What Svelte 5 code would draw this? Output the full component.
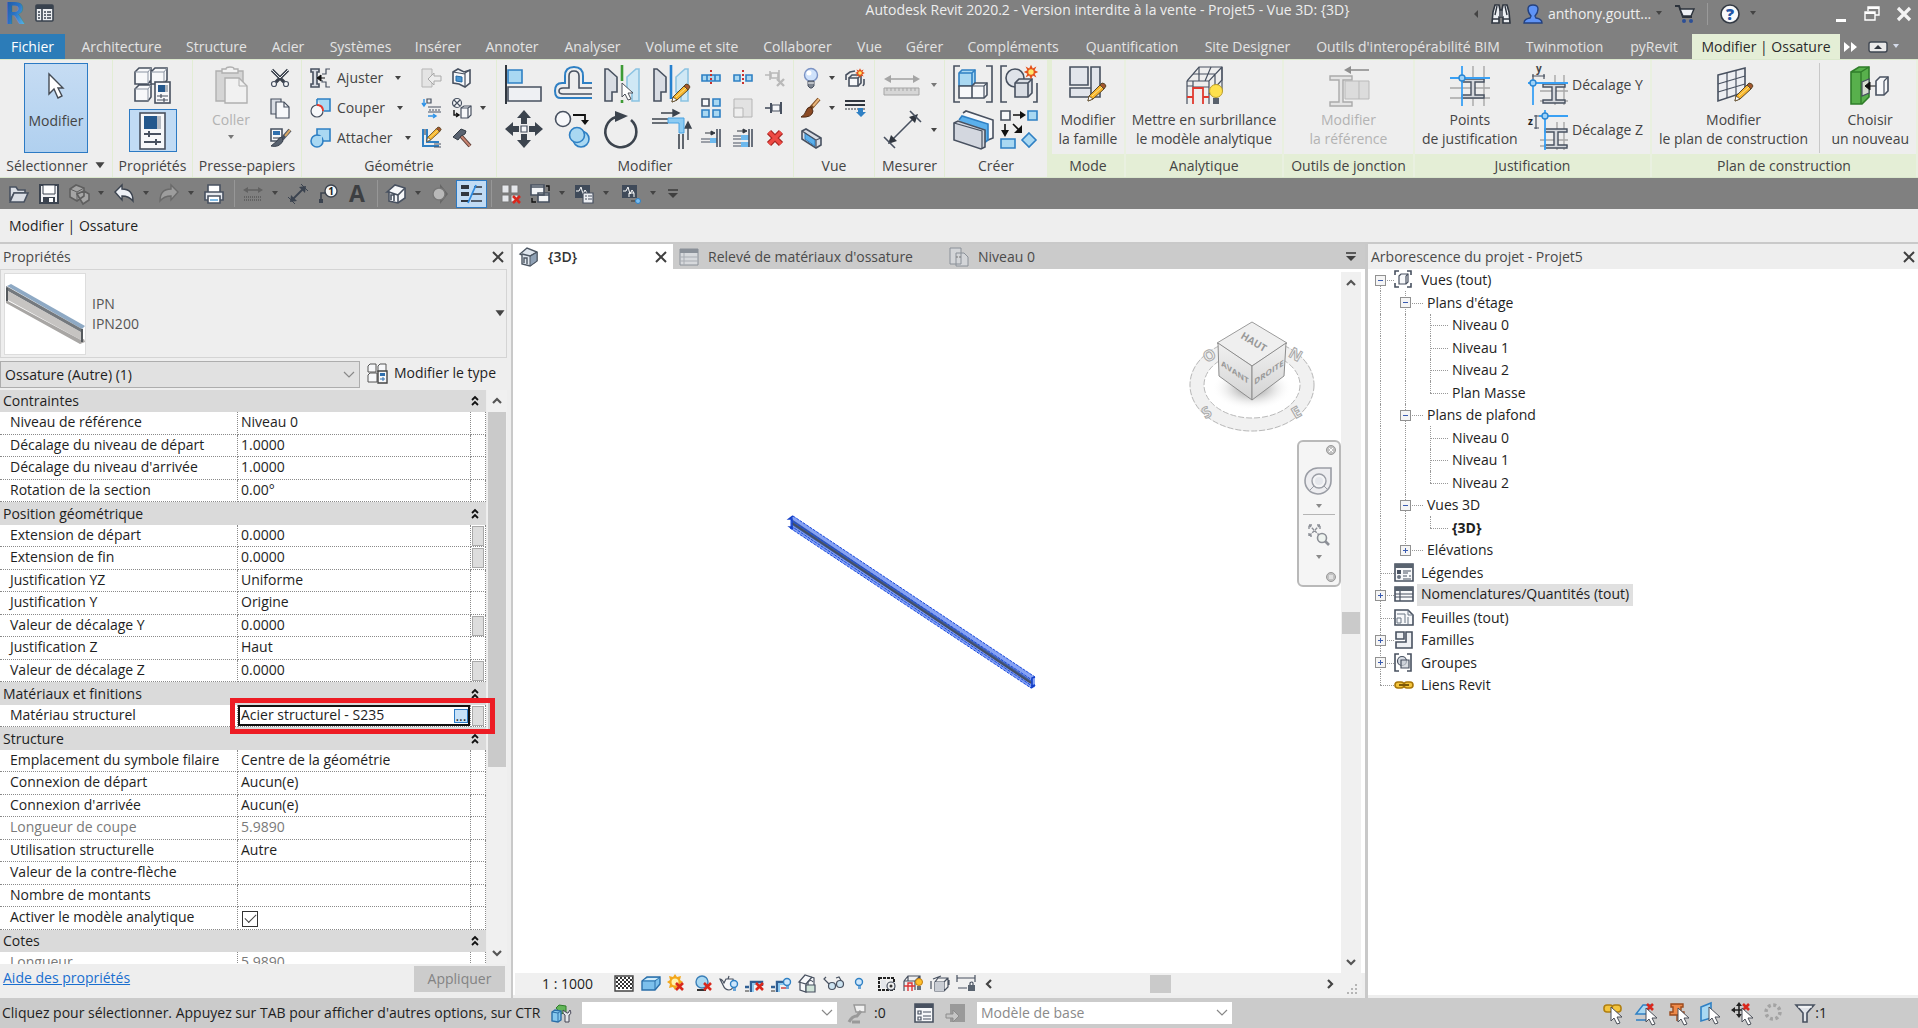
<script lang="ts">
  type Guide = 'root' | 'pipe' | 'tee' | 'end' | 'plain';

  const tabs = [
    { label: 'Architecture', width: 105 },
    { label: 'Structure', width: 85 },
    { label: 'Acier', width: 58 },
    { label: 'Systèmes', width: 87 },
    { label: 'Insérer', width: 68 },
    { label: 'Annoter', width: 80 },
    { label: 'Analyser', width: 81 },
    { label: 'Volume et site', width: 118 },
    { label: 'Collaborer', width: 93 },
    { label: 'Vue', width: 51 },
    { label: 'Gérer', width: 59 },
    { label: 'Compléments', width: 118 },
    { label: 'Quantification', width: 120 },
    { label: 'Site Designer', width: 111 },
    { label: "Outils d'interopérabilité BIM", width: 210 },
    { label: 'Twinmotion', width: 103 },
    { label: 'pyRevit', width: 76 },
  ];

  const quickAccess = [
    { icon: 'open', width: 31 },
    { icon: 'save', width: 30 },
    { icon: 'sync', width: 45, menu: true },
    { icon: 'undo', width: 45, menu: true },
    { icon: 'redo', width: 45, menu: true },
    { icon: 'print', width: 30 },
    { icon: 'sep', width: 9 },
    { icon: 'ruler', width: 45, menu: true },
    { icon: 'aligned', width: 30 },
    { icon: 'tag', width: 30 },
    { icon: 'letter', width: 29 },
    { icon: 'sep', width: 9 },
    { icon: 'house', width: 45, menu: true },
    { icon: 'section', width: 25 },
    { icon: 'thin', width: 31, active: true },
    { icon: 'sep', width: 10 },
    { icon: 'closeviews', width: 29 },
    { icon: 'switch', width: 44, menu: true },
    { icon: 'macro', width: 47, menu: true },
    { icon: 'macrolink', width: 47, menu: true },
  ];

  const smallModify = ['split', 'splitgap', 'unpin', 'array', 'scale', 'pin', 'trim1', 'trim2', 'delete'];
  const largeModify = ['align', 'offset', 'mirrorpick', 'mirrordraw', 'move', 'copy', 'rotate', 'corner'];

  const rows: { label: string; value?: string; head?: boolean; dim?: boolean; assoc?: boolean; kind?: string }[] = [
    { label: 'Contraintes', head: true },
    { label: 'Niveau de référence', value: 'Niveau 0' },
    { label: 'Décalage du niveau de départ', value: '1.0000' },
    { label: "Décalage du niveau d'arrivée", value: '1.0000' },
    { label: 'Rotation de la section', value: '0.00°' },
    { label: 'Position géométrique', head: true },
    { label: 'Extension de départ', value: '0.0000', assoc: true },
    { label: 'Extension de fin', value: '0.0000', assoc: true },
    { label: 'Justification YZ', value: 'Uniforme' },
    { label: 'Justification Y', value: 'Origine' },
    { label: 'Valeur de décalage Y', value: '0.0000', assoc: true },
    { label: 'Justification Z', value: 'Haut' },
    { label: 'Valeur de décalage Z', value: '0.0000', assoc: true },
    { label: 'Matériaux et finitions', head: true },
    { label: 'Matériau structurel', value: 'Acier structurel - S235', assoc: true, kind: 'material' },
    { label: 'Structure', head: true },
    { label: 'Emplacement du symbole filaire', value: 'Centre de la géométrie' },
    { label: 'Connexion de départ', value: 'Aucun(e)' },
    { label: "Connexion d'arrivée", value: 'Aucun(e)' },
    { label: 'Longueur de coupe', value: '5.9890', dim: true },
    { label: 'Utilisation structurelle', value: 'Autre' },
    { label: 'Valeur de la contre-flèche', value: '' },
    { label: 'Nombre de montants', value: '' },
    { label: 'Activer le modèle analytique', kind: 'check' },
    { label: 'Cotes', head: true },
    { label: 'Longueur', value: '5.9890', dim: true },
  ];

  const tree: { label: string; guides: Guide[]; box?: string; icon?: string; bold?: boolean; selected?: boolean }[] = [
    { label: 'Vues (tout)', guides: ['root'], box: '-', icon: 'tviews' },
    { label: "Plans d'étage", guides: ['pipe', 'tee'], box: '-' },
    { label: 'Niveau 0', guides: ['pipe', 'pipe', 'tee'] },
    { label: 'Niveau 1', guides: ['pipe', 'pipe', 'tee'] },
    { label: 'Niveau 2', guides: ['pipe', 'pipe', 'tee'] },
    { label: 'Plan Masse', guides: ['pipe', 'pipe', 'end'] },
    { label: 'Plans de plafond', guides: ['pipe', 'tee'], box: '-' },
    { label: 'Niveau 0', guides: ['pipe', 'pipe', 'tee'] },
    { label: 'Niveau 1', guides: ['pipe', 'pipe', 'tee'] },
    { label: 'Niveau 2', guides: ['pipe', 'pipe', 'end'] },
    { label: 'Vues 3D', guides: ['pipe', 'tee'], box: '-' },
    { label: '{3D}', guides: ['pipe', 'pipe', 'end'], bold: true },
    { label: 'Elévations', guides: ['pipe', 'end'], box: '+' },
    { label: 'Légendes', guides: ['tee'], icon: 'tlegend' },
    { label: 'Nomenclatures/Quantités (tout)', guides: ['tee'], box: '+', icon: 'tschedule', selected: true },
    { label: 'Feuilles (tout)', guides: ['tee'], icon: 'tsheet' },
    { label: 'Familles', guides: ['tee'], box: '+', icon: 'tfamily' },
    { label: 'Groupes', guides: ['tee'], box: '+', icon: 'tgroup' },
    { label: 'Liens Revit', guides: ['end'], icon: 'tlink' },
  ];

  const viewControls = [
    { icon: 'vdetail', width: 27 },
    { icon: 'vcube', width: 25 },
    { icon: 'vsun', width: 28 },
    { icon: 'vshadow', width: 25 },
    { icon: 'vrender', width: 26 },
    { icon: 'vcrop', width: 26 },
    { icon: 'vcropshow', width: 26 },
    { icon: 'vlock', width: 27 },
    { icon: 'vglasses', width: 26 },
    { icon: 'vbulb', width: 27 },
    { icon: 'vtemp', width: 26 },
    { icon: 'vanalytic', width: 27 },
    { icon: 'vdisplace', width: 26 },
    { icon: 'vconstraint', width: 29 },
  ];

  const selectionTools = ['slinks', 'sunderlay', 'spinned', 'sface', 'sdrag', 'sbusy'];

  const D = 'stroke="#485160" stroke-width="1.6"';
  const d = 'stroke="#485160" stroke-width="1.2"';
  const B = 'stroke="#2f80c4" stroke-width="1.6"';
  const W = 'fill="#f7f8fa"';
  const G = 'fill="#d9dde4"';
  const L = 'fill="#a9d8f2"';
  const cursor = (x: number, y: number) =>
    `<path transform="translate(${x} ${y})" d="M0 0v14l3-3 3 6 3-1-3-6h5z" fill="#fff" stroke="#4a4f58"/>`;
  const pencil = (x: number, y: number) =>
    `<g transform="translate(${x} ${y})"><path d="M2 13 13 2l4 4L6 16l-5 2z" fill="#f6b42c" stroke="#5a4626"/><path d="m13 2 2-2q3 0 4 3l-2 3z" fill="#a2562e" stroke="#5a4626"/><path d="m2 13 4 3-5 2z" fill="#fff" stroke="#5a4626" stroke-width=".8"/><path d="M5 13 15 4" stroke="#fde58a"/></g>`;
  const redX = (x: number, y: number, s: number) =>
    `<path d="M${x} ${y}l${s} ${s}M${x + s} ${y}l${-s} ${s}" stroke="#d9281d" stroke-width="2.6"/>`;
  const beamSection = (x: number, y: number) =>
    `<path transform="translate(${x} ${y})" d="M0 0h22v3h-9v13h9v3H0v-3h9V3H0z" fill="#d5d8dd" stroke="#485160" stroke-width="1.4"/>`;
  const star = (x: number, y: number, k: number) =>
    `<g transform="translate(${x} ${y}) scale(${k})"><path d="m0-8 2 4 4-2-2 4 4 2-4 2 2 4-4-2-2 4-2-4-4 2 2-4-4-2 4-2-2-4 4 2z" fill="#e5501a"/><circle r="3" fill="#ffe66b"/></g>`;
  const bulb = (x: number, y: number) =>
    `<g transform="translate(${x} ${y})"><circle cx="4" cy="4" r="3.5" fill="#cfe7fb" stroke="#2f80c4" stroke-width="1.4"/><path d="M3 8h3v3H3z" fill="#6aa5d8"/></g>`;

  const icons: Record<string, string> = {
    logo: `<defs><linearGradient id="rv" x1="0" y1="0" x2="1" y2="1"><stop offset="0" stop-color="#1d4f9b"/><stop offset=".5" stop-color="#2a73c4"/><stop offset="1" stop-color="#5fc0ee"/></linearGradient></defs><text x="0" y="21" font-family="Lato, sans-serif" font-weight="900" font-size="30" fill="url(#rv)">R</text>`,
    home: `<rect x="1" y="2" width="17" height="16" rx="1" fill="#eceef1" stroke="#39424e" stroke-width="1.6"/><path d="M1 2h17v4H1z" fill="#39424e"/><path d="M7 6v12" stroke="#39424e" stroke-width="1.6"/><path d="M3 9h2M3 12h2M3 15h2M9 9h2M9 12h2M9 15h2M12 9h4M12 12h4M12 15h4" stroke="#39424e" stroke-width="1.4"/>`,
    binoculars: `<path d="M2 8 4 1h4l1 5h2l1-5h4l2 7 1 11h-7v-6H8v6H1z" fill="#eceff3" stroke="#2f3640" stroke-width="1.6"/><path d="M1 15h7M12 15h7M9 6v6M11 6v6M6 2 4 11M14 2l2 9" stroke="#2f3640" stroke-width="1.4"/>`,
    user: `<path d="M1 19q0-4 6-5l1-2Q5 9 5 5q0-4 5-4t5 4q0 4-3 7l1 2q6 1 6 5z" fill="#5f93f5" stroke="#24417e" stroke-width="1.4"/>`,
    cart: `<path d="M0 2h4l4 11h9" stroke="#2b323b" stroke-width="2"/><path d="M5 5h14l-3 7H8z" fill="#eef0f4" stroke="#2b323b" stroke-width="1.4"/><circle cx="9" cy="17" r="2" fill="#2c4f96"/><circle cx="16" cy="17" r="2" fill="#2c4f96"/>`,
    help: `<circle cx="10" cy="10" r="9" fill="#f8f9fb" stroke="#333a44" stroke-width="1.6"/><text x="10" y="16" text-anchor="middle" font-family="Open Sans, sans-serif" font-weight="800" font-size="16" fill="#2454a5">?</text>`,
    restore: `<path d="M4 5V1h11v8h-4M1 6h10v8H1z" stroke="#fff" stroke-width="1.4"/><path d="M4 2h11M1 7h10" stroke="#fff" stroke-width="2"/>`,
    close: `<path d="m2 2 12 12M14 2 2 14" stroke="#f4f4f4" stroke-width="3.2"/>`,
    x: `<path d="m1 1 10 10M11 1 1 11" stroke="#3f3f3f" stroke-width="2"/>`,
    arrow: `<path d="M2 1v20l5-5 4 9 4-2-4-8h5z" fill="#fff" stroke="#454b54" stroke-width="1.4"/>`,
    typeprops: `<g ${D} ${W}><path d="m1 5 4-4h12v12l-3 4H1zM17 5l4-4h12v12l-3 4H17zM1 22l4-4h12v12l-3 4H1z"/></g><path d="M1 5h13v12M14 5l3-4M17 5h13v12M30 5l3-4M1 22h13v12M14 22l3-4" stroke="#8c95a3"/><rect x="21" y="15" width="15" height="21" ${W} ${D}/><path d="M24 18h7v7h-7z" fill="#24588d"/><path d="M31 18h3v7h-3z" fill="#aeb4bc"/><path d="M23 29h11M23 33h11M27 27v4M30 31v4" ${d}/>`,
    props: `<rect x="1" y="1" width="25" height="36" ${W} ${D}/><path d="M5 4h13v13H5z" fill="#24588d"/><path d="M18 4h4v13h-4z" fill="#b6bbc3"/><path d="M5 22h17M5 30h17M10 19v6M17 27v6" stroke="#485160" stroke-width="2"/>`,
    paste: `<path d="M2 5h27v30H2z" fill="#d5d5d5" stroke="#b0b0b0" stroke-width="1.4"/><path d="M8 7V3h4q0-2 4-2t4 2h4v4z" fill="#f2f2f2" stroke="#b0b0b0" stroke-width="1.4"/><path d="M11 12h14l8 8v17H11z" fill="#f1f1f1" stroke="#b0b0b0" stroke-width="1.4"/><path d="M25 12v8h8" stroke="#b0b0b0"/>`,
    cut: `<path d="M2 2 15 15M18 2 5 15" stroke="#3a414c" stroke-width="3.2"/><path d="M2 2l8 8M18 2l-8 8" stroke="#e9ebee"/><circle cx="4" cy="16" r="2.5" ${d} ${W}/><circle cx="16" cy="16" r="2.5" ${d} ${W}/>`,
    copyclip: `<path d="M1 1h10v15H1z" ${G} ${d}/><path d="M6 4h8l5 5v11H6z" ${W} ${d}/><path d="M14 4v5h5" ${d}/>`,
    matchprops: `<path d="M1 1h11v12H1z" ${W} ${D}/><path d="M3 3h7v4H3z" fill="#2f6fae"/><path d="M3 10h7" ${d}/><path d="m20 2-8 9" stroke="#485160" stroke-width="4"/><path d="m20 2-5 6" stroke="#d8a765" stroke-width="2"/><path d="M12 9q-3 0-5 4l-6 5q8 2 12-5z" fill="#59626f" stroke="#3b434f"/>`,
    cope: `<path d="M1 1h8v3H7v12h2v3H1v-3h2V4H1z" ${G} ${D}/><path d="M20 1h-4v5h-4M20 19h-4v-5h-4v-2" ${d}/><path d="M8 10h7M11 7l-4 3 4 3z" stroke="#111" fill="#111"/>`,
    cutgeo: `<path d="M7 1h13v12h-6" ${L} ${B}/><path d="M7 1v6" ${B}/><circle cx="7" cy="13" r="6" ${W} ${d}/><path d="M7 7q6 0 6 6" stroke="#e8372c" stroke-width="1.8"/>`,
    join: `<path d="M7 1h13v12H7z" ${L} ${B}/><circle cx="7" cy="13" r="6" ${L} ${B}/><path d="M8 8h4v5H8z" fill="#a9d8f2"/>`,
    joinroof: `<path d="M1 1h10v18H1z" fill="#e4e4e4" stroke="#b5b5b5"/><path d="M20 8h-7V5l-6 6 6 6v-4h7z" fill="#ededed" stroke="#a9a9a9"/>`,
    beamjoin: `<path d="M3 1v7M1 5l2 3 2-3M7 18h7M12 16l3 2-3 2" stroke="#2e93e8" stroke-width="1.4"/><path d="M7 9h13M7 14h13" ${d}/><path d="M8 12h12" stroke="#485160" stroke-dasharray="2 1"/><path d="M6 1v4h4V1z" ${d}/>`,
    walljoin: `<path d="M2 1v17h16M6 1v13h12" stroke="#2f80c4" stroke-width="2"/><path d="M4 1v6M13 16h7M13 19h7" ${d}/><g transform="translate(5 -1) scale(.8)">${pencil(0, 0)}</g>`,
    paint: `<path d="m1 4 5-3 6 3 6-2v13l-5 4-6-3-6-1z" ${W} ${D}/><path d="M13 5v14M13 5l5-3M1 4l12 2" ${d}/><path d="m4 8 6 1v5l-6-1z" fill="#4a96d2" stroke="#2368a4"/>`,
    wallopening: `<circle cx="5" cy="5" r="4.5" ${W} ${d}/><path d="m2 2 6 6M8 2 2 8" ${d}/><path d="M2 12v5h4M4 15l3 2-3 2" stroke="#111" stroke-width="1.4"/><path d="m9 10 3-2h7v9l-3 3H9z" ${W} ${d}/><path d="M9 10h7v10M16 10l3-2" ${d}/>`,
    demolish: `<path d="m9 8 9 10" stroke="#5a3a34" stroke-width="4"/><path d="m9 8 9 10" stroke="#c78370" stroke-width="2"/><path d="M1 9 9 1l5 2-1 3-4 2-3 4z" fill="#596270" stroke="#333a44"/>`,
    align: `<path d="M1 0v39" stroke="#30363f" stroke-width="2"/><path d="M3 5h14v13H3z" ${L} ${B}/><path d="M3 22h33v14H3z" fill="#eef0f3" ${D}/>`,
    offset: `<path d="M38 18h-9V11q0-9-9-9t-9 9v7H8q-7 0-7 8t7 7h30" stroke="#2f80c4" stroke-width="2"/><path d="M38 23H25V11q0-5-5-5t-5 5v12H9q-4 0-4 3t4 3h29" ${D}/>`,
    mirrorpick: `<path d="M2 4h3l9 8v15H9v9H2z" ${G} ${D}/><path d="M36 4h-3l-9 8v15h5v9h7z" fill="#cfe8f5" stroke="#8cc3e2" stroke-width="1.6"/><path d="M19 0v16M19 35v3" stroke="#3d9b35" stroke-width="2.6"/>${cursor(19, 18)}`,
    mirrordraw: `<path d="M2 4h3l9 8v15H9v9H2z" ${G} ${D}/><path d="M36 4h-3l-9 8v15h5v9h7z" fill="#cfe8f5" stroke="#8cc3e2" stroke-width="1.6"/><path d="M19 0v34" stroke="#2580cf" stroke-width="2.6"/>${pencil(19, 19)}`,
    move: `<path d="m19 0 7 8h-4v6h-6V8h-4zM19 38l7-8h-4v-6h-6v6h-4zM0 19l8-7v4h6v6H8v4zM38 19l-8-7v4h-6v6h6v4z" fill="#3c444e"/><path d="M16 16h6v6h-6z" ${W} ${d}/>`,
    copy: `<circle cx="9" cy="9" r="7.5" ${W} ${D}/><path d="M19 5h12v6" stroke="#111" stroke-width="1.8"/><path d="m27 10 4 5 4-5z" fill="#111"/><circle cx="27" cy="29" r="8" ${L} ${B}/><circle cx="23" cy="25" r="7.5" ${L} ${B}/>`,
    rotate: `<path d="M28 10A15.500 15.500 0 1 1 13 7" stroke="#3c444e" stroke-width="2.6"/><path d="m12 1 13 5-13 6z" fill="#3c444e"/>`,
    corner: `<path d="M9 3h16M21 0l6 3-6 3zM36 30V14M33 18l3-6 3 6z" stroke="#3c444e" fill="#3c444e" stroke-width="1.4"/><path d="M0 9h16M0 13h16M27 24v15M31 24v15" stroke="#3c444e" stroke-width="1.6"/><path d="M16 8h16v15h-5V13H16z" fill="#8ccbf3" stroke="#48a2e2"/>`,
    split: `<path d="M1 7h18v6H1z" ${L} ${B}/><path d="M6 7v6M14 7v6" ${B}/><path d="M10 2v16" stroke="#c9302c" stroke-width="2" stroke-dasharray="2 2"/>`,
    splitgap: `<path d="M1 7h6v6H1zM13 7h6v6h-6z" ${L} ${B}/><path d="M10 2v16" stroke="#c9302c" stroke-width="2" stroke-dasharray="2 2"/>`,
    unpin: `<path d="M0 7h5M5 3v9M6 5h7v5H6zM14 2v10" stroke="#b9b9b9" stroke-width="1.6"/><path d="m12 11 7 7M19 11l-7 7" stroke="#b9b9b9" stroke-width="2.4"/>`,
    pin: `<path d="M0 10h6" ${D}/><path d="M6 5v10M16 4v12" stroke="#485160" stroke-width="2"/><path d="M7 7h8v6H7z" ${W} ${d}/>`,
    array: `<path d="M1 1h7v7H1z" ${W} ${D}/><path d="M12 1h7v7h-7zM1 12h7v7H1zM12 12h7v7h-7z" ${L} ${B}/>`,
    scale: `<path d="M1 1h18v18H1z" fill="#e2e2e2" stroke="#b5b5b5"/><path d="M1 10h9v9H1z" fill="#efefef" stroke="#b5b5b5"/>`,
    trim1: `<path d="M4 5h8M10 3l4 2-4 2z" stroke="#30363f" fill="#30363f"/><path d="M0 11h9M0 14h9" ${d}/><path d="M9 10h7v5H9z" fill="#6db9ee"/><path d="M16 1v18M19 1v18" ${D}/>`,
    trim2: `<path d="M4 3h8M10 1l4 2-4 2z" stroke="#30363f" fill="#30363f"/><path d="M0 8h8M0 11h8M0 15h8M0 18h8" ${d}/><path d="M8 7h8v5H8zM8 14h8v5H8z" fill="#6db9ee"/><path d="M16 1v18M19 1v18" ${D}/>`,
    delete: `<path d="m4 4 12 12M16 4 4 16" stroke="#a92622" stroke-width="6"/><path d="m4 4 12 12M16 4 4 16" stroke="#ee4a44" stroke-width="3.500"/>`,
    bulb: `<circle cx="10" cy="7" r="6.500" fill="#cfe2fb" stroke="#7b93c4" stroke-width="1.4"/><circle cx="8" cy="5" r="2.500" fill="#fff"/><path d="M7 13h6v5l-2 2H9l-2-2z" fill="#7d8590" stroke="#485160"/><path d="M7 15h6" stroke="#fff"/>`,
    explode: `<path d="M4 10h9v8H4z" ${W} ${D}/><path d="m4 10 3-3h9v8l-3 3M13 10l3-3" ${D}/><path d="M1 12V7l4-3 5-1M19 11v5l-1 2" ${D}/>${star(15, 5, 0.6)}`,
    brush: `<path d="m18 1-9 10" stroke="#7a4a22" stroke-width="4"/><path d="m18 1-6 7" stroke="#e8b57a" stroke-width="2"/><path d="M10 9q-4 0-5 4-1 4-5 6 11 1 12-6z" fill="#8b4a24" stroke="#4e2a14"/>`,
    linework: `<path d="M0 3h20M0 7h20" stroke="#30363f" stroke-width="2"/><path d="M0 11h20" stroke="#30363f" stroke-dasharray="2 1"/><path d="M13 10h5v4h3l-5 5-5-5h2z" fill="#2f80c4"/>`,
    sectionbox: `<path d="m1 3 4-2 15 9v7l-5 3-14-9z" ${G} ${D}/><path d="m4 5 10 7v6L4 11z" fill="#5bb0ec" stroke="#2f80c4"/><path d="m1 3 14 9v8M15 12l5-2" ${d}/>`,
    measure: `<path d="M3 6h32" stroke="#a5a5a5" stroke-width="1.6"/><path d="m1 6 7-4v8zM37 6l-7-4v8z" fill="#a5a5a5"/><path d="M1 15h35v7H1z" fill="#d6d6d6" stroke="#a5a5a5"/><path d="M4 15v3M8 15v3M12 15v3M16 15v3M20 15v3M24 15v3M28 15v3M32 15v3" stroke="#a5a5a5"/>`,
    dimension: `<path d="M8 31 32 7" ${D}/><path d="m5 34 3-9 6 6zM35 4l-3 9-6-6z" fill="#30363f"/><path d="m1 27 11 11M27 1l11 11" ${D}/>`,
    groupcreate: `<path d="M7 1H1v36h6M33 1h6v36h-6" ${D}/><path d="M6 8l3-3h13v13l-3 3H6z" ${L} ${B}/><path d="M6 8h13v13M19 8l3-3" ${B}/><path d="M6 21h13v12H6zM19 21l3-3h12v12l-3 3H19z" ${W} ${D}/><path d="M19 21h12v12M31 21l3-3" ${d}/>`,
    groupsimilar: `<path d="M7 1H1v36h6M33 37h4V18" ${D}/><circle cx="15" cy="13" r="9" fill="#dfe3ea" ${D}/><path d="m15 18 4-4h13v14l-4 4H15z" ${G} ${D}/><path d="M15 18h13v14M28 18l4-4" ${D}/>${star(31, 7, 0.9)}`,
    assembly: `<path d="m10 3 3-2 27 9v18l-5 2" ${W} ${D}/><path d="m6 10 3-4 26 8v16l-4 3" fill="#5bb0ec" ${B}/><path d="m1 13 4-2 27 9v17l-4 2-27-9z" fill="#d3d7df" ${D}/><path d="m1 13 28 8v17" ${d}/>`,
    component: `<path d="M1 1h9v9H1z" ${W} ${D}/><path d="M28 1h9v9h-9zM1 29h14v9H1zM29 23l7 7-7 7-7-7z" ${L} ${B}/><path d="M13 5h10M5 14v9M13 14l7 7" stroke="#111" stroke-width="1.6"/><path d="m20 1 6 4-6 4zM1 20l4 7 4-7zM22 15v8h-8z" fill="#111"/>`,
    editfamily: `<path d="M1 1h18v18H1zM22 1h9v30H22zM1 22h21v9H1z" fill="#e2e5eb" ${D}/>${pencil(18, 17)}`,
    highlight: `<path d="M2 15 14 1h23v13L24 28" ${d}/><path d="M2 15h22L37 1M2 38V15M24 15v23M37 1v24M8 15v6h16M2 20h6M14 1v14M26 1 20 15M8 8h22M30 8v14" ${d}/><path d="M2 31h6v7M8 38V22h10v16M18 31h6" stroke="#e03a2f" stroke-width="1.8"/><circle cx="31" cy="25" r="6.500" fill="#ffe14d" stroke="#b89a2a"/><path d="M28 32h6v6h-6z" fill="#59616c"/>`,
    editref: `<path d="M1 10h22v4h-9v22h9v4H1v-4h9V14H1z" fill="#e4e4e4" stroke="#aaa" stroke-width="1.4"/><path d="M16 15h24v18H16zM30 15v18" fill="#dcdcdc" stroke="#b9b9b9"/><path d="M19 4h21" stroke="#8f8f8f" stroke-width="1.6"/><path d="m15 4 7-4v8z" fill="#8f8f8f"/>`,
    points: `<path d="M23 0v40M34 0v40M0 22h40M0 32h40" stroke="#a8a8a8" stroke-width="1.4"/>${beamSection(12, 13)}<path d="M12 0v40M0 12h40" stroke="#39a0f4" stroke-width="1.8"/><circle cx="12" cy="12" r="3" fill="#9fd3f8" stroke="#2b86d2" stroke-width="1.4"/>`,
    offsety: `<path d="M27 10v30M36 10v30M12 26h28M12 36h28" stroke="#a8a8a8" stroke-width="1.4"/>${beamSection(15, 19)}<path d="M5 14v26M0 18h40" stroke="#39a0f4" stroke-width="1.8"/><circle cx="5" cy="18" r="3" fill="#9fd3f8" stroke="#2b86d2" stroke-width="1.4"/><path d="M4 11h13M5 9v5M16 9v5" ${d}/><text x="8" y="7" font-size="10" font-weight="700" fill="#444">y</text>`,
    offsetz: `<path d="M29 12v28M36 12v28M12 30h28M12 36h28" stroke="#a8a8a8" stroke-width="1.4"/>${beamSection(17, 19)}<path d="M17 0v40M11 6h29" stroke="#39a0f4" stroke-width="1.8"/><circle cx="17" cy="6" r="3" fill="#9fd3f8" stroke="#2b86d2" stroke-width="1.4"/><path d="M8 5v14M6 6h5M6 18h5" ${d}/><text x="0" y="15" font-size="10" font-weight="700" fill="#222">z</text>`,
    workplane: `<path d="m3 9 27-7v24L3 35z" fill="#eceef2" ${D}/><path d="m12 7v25M21 4v25M3 18l27-8M3 26l27-8" ${d}/>${pencil(19, 17)}`,
    picknew: `<path d="m1 6 8-5h10v30l-7 7H1z" fill="#58b04c" stroke="#2f7d2a" stroke-width="1.6"/><path d="M1 6h10v32M11 6l8-5" stroke="#2f7d2a" stroke-width="1.4"/><path d="M12 16l7-3v14l-7 3z" fill="#d5dccf" ${d}/><path d="M18 20h8M20 16l-5 4 5 4z" stroke="#111" fill="#111"/><path d="m26 15 4-4h8v14l-4 4h-8z" ${W} ${D}/><path d="M34 15v14M34 15l4-4" ${d}/>`,
    open: `<path d="M2 3h6l2 3h7v3H6l-4 8z" ${G} ${D}/><path d="M6 9h14l-4 9H2z" ${G} ${D}/>`,
    save: `<path d="M1 1h18v18H1z" fill="#f2f3f5" stroke="#3b434f" stroke-width="2"/><path d="M4 1h12v9H4z" fill="#fff" stroke="#3b434f"/><path d="M4 13h12v6H4z" fill="#3b434f"/><path d="M10 14h4v4h-4z" fill="#fff"/>`,
    sync: `<path d="m1 5 6-4 8 3v8l-7 5-7-4zM8 10l7-3 5 3v6l-6 4z" fill="#a5a5a5" stroke="#5f5f5f" stroke-width="1.6"/><path d="m1 5 7 3 7-4M8 8v9" stroke="#5f5f5f"/>`,
    undo: `<path d="M1 8 8 1v4q11 0 11 12-4-5-11-5v4z" fill="#eef1f6" stroke="#3b434f" stroke-width="1.4"/>`,
    redo: `<path d="M19 8 12 1v4Q1 5 1 17q4-5 11-5v4z" fill="#9d9d9d" stroke="#6a6a6a" stroke-width="1.4"/>`,
    print: `<path d="M4 1h12v8H4z" fill="#fff" ${D}/><path d="M1 8h18v8H1z" fill="#e7eaef" ${D}/><path d="M4 12h12v7H4z" fill="#fff" ${D}/><path d="M6 16h8" stroke="#7fbbe6" stroke-width="2"/>`,
    ruler: `<path d="M3 6h14" stroke="#626262" stroke-width="1.6"/><path d="m0 6 5-3v6zM20 6l-5-3v6z" fill="#626262"/><path d="M1 13h18M1 16h18" stroke="#626262" stroke-width="2" stroke-dasharray="1 1"/>`,
    aligned: `<path d="M4 16 16 4" stroke="#3b434f" stroke-width="1.8"/><path d="m2 18 1-7 6 6zM18 2l-1 7-6-6z" fill="#3b434f"/><path d="m0 13 7 7M13 0l7 7" stroke="#3b434f"/>`,
    tag: `<path d="M3 18V9h5" stroke="#3b434f" stroke-width="1.6"/><path d="M1 15h4v4H1z" fill="#3b434f"/><circle cx="13" cy="7" r="6" fill="#f8f8f8" stroke="#3b434f" stroke-width="1.4"/><text x="13" y="11" text-anchor="middle" font-family="Open Sans, sans-serif" font-size="10" font-weight="700" fill="#222">1</text>`,
    letter: `<text x="9" y="18" text-anchor="middle" font-family="Open Sans, sans-serif" font-size="23" font-weight="700" fill="#3d3f42">A</text>`,
    house: `<path d="m1 8 8-7 10 3v10l-7 5-9-2V8z" ${W} ${D}/><path d="m3 8 9 3 7-7M12 11v8M5 16v-5h3v6" ${D}/>`,
    section: `<path d="m9 0 8 10-8 10z" fill="#666"/><circle cx="8" cy="10" r="6" fill="#b9b9b9" stroke="#777" stroke-width="1.4"/>`,
    thin: `<path d="M1 3h8M1 10h8" stroke="#30363f" stroke-width="4"/><path d="M1 17h8" stroke="#30363f" stroke-width="2"/><path d="M14 3h8M12 10h10M11 17h11" stroke="#30363f" stroke-width="1.6"/><path d="M16 1 8 19" stroke="#2d8ae0" stroke-width="1.8"/>`,
    closeviews: `<path d="M1 1h7v8H1zM10 1h7v8h-7zM1 11h7v7H1zM10 11h7v7h-7z" fill="#e4e6ea" stroke="#777"/>${redX(12, 12, 7)}`,
    switch: `<path d="M1 1h13v10H1zM8 9h11v9H8z" fill="#f3f4f6" ${D}/><path d="M1 3h13M8 11h11" ${D}/><path d="M16 2h3v5M2 14v4h4" stroke="#111" stroke-width="1.4"/>`,
    macro: `<path d="M1 1h15v13H1z" fill="#3f4a59"/><path d="M2 7h3l2-4 2 7 2-4 2 3" stroke="#fff"/><path d="M9 9h10v10H9z" fill="#eceef2" ${d}/><path d="M11 12h2M11 15h2M14 12h4M14 15h4" ${d}/>`,
    macrolink: `<path d="M1 1h15v13H1z" fill="#3f4a59"/><path d="M2 7h3l2-4 2 7 2-4 2 3M8 13V9h5v4" stroke="#fff"/><path d="M10 17h4" stroke="#333"/><circle cx="17" cy="17" r="2.500" fill="#79bdf0" stroke="#2f80c4"/>`,
    overflow: `<path d="M0 1h10" stroke="#3f3f3f" stroke-width="1.6"/><path d="M0 4h10l-5 5z" fill="#3f3f3f"/>`,
    collapse: `<rect x="1" y="1" width="18" height="10" rx="2" fill="#e9e9e9" stroke="#3d4550" stroke-width="1.4"/><path d="m6 8 4-4 4 4z" fill="#30363f"/>`,
    chevrons: `<path d="m1 4 3-3 3 3M1 9l3-3 3 3" stroke="#111" stroke-width="1.8"/>`,
    up: `<path d="m1 6 4-4 4 4" stroke="#555" stroke-width="2.200"/>`,
    down: `<path d="m1 2 4 4 4-4" stroke="#555" stroke-width="2.200"/>`,
    left: `<path d="M6 1 2 5l4 4" stroke="#444" stroke-width="2.200"/>`,
    right: `<path d="m2 1 4 4-4 4" stroke="#444" stroke-width="2.200"/>`,
    drop: `<path d="m1 1 5 5 5-5" stroke="#888" stroke-width="1.2"/>`,
    edittype: `<g ${W} stroke="#555"><path d="m1 3 2-2h6v8H1zM11 3l2-2h6v8h-8zM1 12l2-2h7v9H1z"/></g><path d="M11 8h9v12h-9z" ${W} stroke="#444" stroke-width="1.4"/><path d="M13 10h5v3h-5z" fill="#2f6fae"/><path d="M13 16h5M16 14v4" stroke="#2f6fae"/>`,
    grip: `<path d="M8 1h2v2H8zM4 5h2v2H4zM8 5h2v2H8zM0 9h2v2H0zM4 9h2v2H4zM8 9h2v2H8z" fill="#b5b5b5"/>`,
    tabhouse: `<path d="m1 7 7-6 10 4v9l-7 5-8-2V8z" fill="#dfe6ee" stroke="#4d5763" stroke-width="1.4"/><path d="m11 9 7-4v9l-7 5z" fill="#8fa1b5" stroke="#4d5763"/><path d="m3 7 8 2 7-4M5 16v-5h3v6" stroke="#4d5763" stroke-width="1.4"/>`,
    tabsheet: `<path d="M1 2h18v16H1z" fill="#d7d9dc" stroke="#8a9098"/><path d="M1 2h18v4H1z" fill="#8a9098"/><path d="M5 6v12M1 10h18M1 14h18" stroke="#a9adb3"/>`,
    tabplan: `<path d="M1 1h11v16H1zM7 6h8l4 4v9H7z" fill="#d3d5d8" stroke="#8a9098"/><path d="M7 10h6" stroke="#777" stroke-dasharray="2 1"/>`,
    tviews: `<path d="M1 5V1h4M13 1h4v4M17 13v4h-4M5 17H1v-4" ${D}/><path d="m5 6 2-2h7v8l-2 2H5z" ${W} ${d}/><path d="M12 6v8M12 6l2-2" ${d}/>`,
    tlegend: `<path d="M1 1h18v17H1z" ${W} ${D}/><path d="M1 1h18v4H1z" fill="#59636f"/><path d="M3 7h4v4H3z" fill="#485160"/><circle cx="5" cy="14" r="2" fill="#6a7380"/><path d="M9 8h8M9 10h5M9 13h4M15 13h2M9 16h8" ${d}/>`,
    tschedule: `<path d="M1 2h18v14H1z" ${W} ${D}/><path d="M1 2h18v4H1z" fill="#59636f"/><path d="M6 6v10M1 9h18M1 12h18" ${d}/>`,
    tsheet: `<path d="M1 2h13l5 5v10H1z" ${W} ${D}/><path d="M3 6h8v9M3 10h4v5H3zM14 2v5h5M14 9v8" stroke="#6b7684"/>`,
    tfamily: `<path d="M2 2h8v7H2zM12 2h6v16H2v-6h10z" fill="#eef0f3" ${D}/>`,
    tgroup: `<path d="M5 1H1v17h4M13 1h4v17h-4" ${D}/><circle cx="8" cy="8" r="4.500" ${G} ${d}/><path d="M7 7h8v8H7z" fill="#c9ced6" fill-opacity=".7" ${d}/>`,
    tlink: `<rect x="1" y="7" width="9" height="6" rx="3" fill="#f4c53e" stroke="#a87608" stroke-width="1.6"/><rect x="10" y="7" width="9" height="6" rx="3" fill="#f4c53e" stroke="#a87608" stroke-width="1.6"/><path d="M5 10h10" stroke="#7e5a0a" stroke-width="2"/>`,
    vdetail: `<path d="M1 2h18v15H1z" fill="#fff" stroke="#444" stroke-width="1.4"/><path d="M2 4h17M2 8h17M2 12h17" stroke="#333" stroke-width="2" stroke-dasharray="2 2"/><path d="M4 6h15M4 10h15M4 14h15" stroke="#333" stroke-width="2" stroke-dasharray="2 2"/>`,
    vcube: `<path d="m1 7 5-4h13v7l-5 6H1z" fill="#7cc0ec" stroke="#2a6ea8" stroke-width="1.4"/><path d="M1 7h13v9M14 7l5-4" stroke="#2a6ea8"/><path d="m3 6 4-2h10l-3 2z" fill="#d5eefb"/>`,
    vsun: `<path d="m9 0 2 3 4-1-1 4 3 2-3 2 1 4-4-1-2 3-2-3-4 1 1-4-3-2 3-2-1-4 4 1z" fill="#f3a71c"/><circle cx="9" cy="8" r="3.500" fill="#fff3b0"/>${redX(10, 9, 7)}`,
    vshadow: `<circle cx="8" cy="8" r="6" fill="#a9d8f2" stroke="#3a7fb8" stroke-width="1.4"/><path d="M3 16h9" stroke="#333" stroke-width="2"/>${redX(10, 9, 7)}`,
    vrender: `<path d="M1 5q2 0 4 4l2-4h7l1 4q-1 7-5 7t-6-5zM9 5l1-3" ${W} ${d}/>${bulb(11, 6)}`,
    vcrop: `<path d="M0 13h4M6 18V8h11v4" stroke="#2f5f94" stroke-width="2.400"/><path d="M8 18v-8h8" stroke="#8cc8ef" stroke-width="2"/><path d="M0 17h4" stroke="#333"/>${redX(11, 9, 7)}`,
    vcropshow: `<path d="M0 13h4M6 18V8h8" stroke="#2f5f94" stroke-width="2.400"/><path d="M8 18v-8h5" stroke="#8cc8ef" stroke-width="2"/><path d="M10 14h5" stroke="#c33" stroke-width="1.4"/><path d="M0 17h4" stroke="#333"/>${bulb(12, 4)}`,
    vlock: `<path d="m2 8 6-7 9 3v10l-8 4-6-2V8z" ${W} ${d}/><path d="m2 8 7 2 6-7M9 10v8" ${d}/><path d="M9 11h9v7H9z" fill="#cfe3d8" ${d}/><path d="M11 11V8q3-3 5 0" ${d}/>`,
    vglasses: `<path d="M5 10 0 5l2-2M18 8l-3-5-3 1" ${d}/><circle cx="8" cy="12" r="3.500" fill="#cde3f0" ${d}/><circle cx="16" cy="10" r="3.500" fill="#cde3f0" ${d}/>`,
    vbulb: `${bulb(5, 4)}`,
    vtemp: `<path d="M2 4h15v12H2z" stroke="#222" stroke-width="2" stroke-dasharray="3 1"/><path d="M4 6h5v8H4z" fill="#e4e6ea"/><circle cx="14" cy="12" r="4" fill="#f0f0f0" ${d}/><circle cx="14" cy="12" r="1.500" fill="#333"/>`,
    vanalytic: `<path d="m1 7 4-5h12v6M1 7h11v9M1 17V7M5 2v5M12 7l5-5" ${d}/><path d="M5 17V9h4v8M1 12h11" stroke="#d33" stroke-width="1.4"/><circle cx="16" cy="8" r="3.500" fill="#ffc02c" stroke="#c07c12"/><path d="M14 12h4v4h-4z" fill="#66707c"/>`,
    vdisplace: `<path d="M5 8h9v9H5zM5 8l3-4h10v9l-4 4M14 8l4-4M1 7v8M3 5l8-3M19 6v5" ${d}/><path d="M5 8h9v9H5z" fill="#c9cdd4"/>`,
    vconstraint: `<path d="M1 1v7M19 1v7M1 4h18M2 14h9" ${d}/><path d="M12 11h7v6h-7z" fill="#59636f"/><path d="M14 11V9q2-2 3 0v2" ${d}/>`,
    worksets: `<path d="m5 5 3-3 7 1v6l-5 2z" fill="#62b558" stroke="#2f7d2a"/><path d="m1 9 3-2 6 1v9l-3 2-6-1z" fill="#86c8ef" stroke="#2a6ea8" stroke-width="1.4"/><path d="M1 9l6 1v9M7 10l3-2" stroke="#2a6ea8"/><path d="M12 7q-1 4 2 5v7h4v-7q3-1 1-5l-2 3h-1z" fill="#e4e6ea" stroke="#445"/>`,
    editable: `<path d="M6 2h11v7H8z" fill="#f1f1f1" stroke="#999" stroke-width="1.4"/><path d="M1 19q3-6 8-6l4-5M4 19h8" stroke="#999" stroke-width="3"/>`,
    designopt: `<path d="M1 1h18v18H1z" ${W} ${D}/><path d="M1 1h18v4H1z" fill="#485160"/><path d="M4 8h3v3H4zM4 14h3v3H4zM9 9h8M9 13h8M9 16h8" ${d}/>`,
    addopt: `<path d="M4 1h15v18H4z" fill="#9a9a9a"/><path d="M0 11h7V7l6 6-6 6v-4H0z" fill="#c4c4c4" stroke="#8c8c8c"/>`,
    slinks: `<rect x="1" y="3" width="9" height="7" rx="3" fill="#f4c53e" stroke="#b07f10" stroke-width="1.6"/><rect x="9" y="3" width="9" height="7" rx="3" fill="#f4c53e" stroke="#b07f10" stroke-width="1.6"/>${cursor(8, 5)}`,
    sunderlay: `<path d="m1 12 7-9h8l-5 9zM1 18h12" fill="#a9d8f2" stroke="#2f80c4" stroke-width="1.4"/>${redX(12, 2, 6)}${cursor(11, 6)}`,
    spinned: `<path d="M4 2h12v3h-2v5h3v3H3v-3h3V5H4zM10 13v6" fill="#ef8a4a" stroke="#9c4a1c" stroke-width="1.4"/>${cursor(11, 6)}`,
    sface: `<path d="m2 5 10-4v15L2 19z" fill="#a9d8f2" stroke="#2f80c4" stroke-width="1.6"/>${cursor(10, 5)}`,
    sdrag: `<path d="M2 8h12M8 2v12" stroke="#222" stroke-width="1.6"/><path d="m0 8 4-3v6zM8 0l3 4H5zM8 16l3-4H5z" fill="#222"/>${redX(12, 2, 6)}${cursor(11, 6)}`,
    sbusy: `<circle cx="10" cy="10" r="7" stroke="#a3a3a3" stroke-width="3.500" stroke-dasharray="3 2.500"/>`,
    filter: `<path d="M1 2h18l-7 8v9H8v-9z" fill="#e2e5ea" ${D}/><path d="M3 4h14" stroke="#fff"/>`,
    wheel: `<path d="M14 1h12v13a13 13 0 1 1-12-13z" fill="#ededf0" stroke="#9a9da5" stroke-width="1.6"/><circle cx="14" cy="14" r="7" fill="#f4f4f6" stroke="#9a9da5" stroke-width="1.4"/><circle cx="14" cy="14" r="4" fill="#e5e7ec"/><path d="m9 19-4 4M19 19l4 4" stroke="#9a9da5"/>`,
    zoomfit: `<path d="M1 5V1h4M9 1h3v4M1 9v3h3M1 1l11 11M12 1 1 12" stroke="#8c8f96" stroke-width="1.4" stroke-dasharray="3 1"/><circle cx="14" cy="14" r="4.500" fill="#eef3ef" stroke="#8c8f96" stroke-width="1.6"/><path d="m17 17 4 4" stroke="#8c8f96" stroke-width="2.600"/>`,
    navclose: `<circle cx="5" cy="5" r="4.500" fill="#c2c2c2" stroke="#999"/><path d="m3 3 4 4M7 3 3 7" stroke="#fff"/>`,
    navmenu: `<circle cx="5" cy="5" r="4.500" fill="#c2c2c2" stroke="#999"/><path d="M3 4h4M3 6h4" stroke="#fff"/>`,
  };

  let material = 'Acier structurel - S235';
  let analytic = true;
</script>

{#snippet icon(name: string, w = 20, h = w)}
  <svg width={w} height={h} viewBox="0 0 {w} {h}" fill="none" aria-hidden="true">{@html icons[name]}</svg>
{/snippet}

{#snippet caret(cls = '')}
  <svg class="caret {cls}" width="8" height="5" viewBox="0 0 8 5" aria-hidden="true"><path d="M1 0h6L4 4z" fill="currentColor" /></svg>
{/snippet}

{#snippet tool(name: string, label: string, w = 20, h = w)}
  <button class="tool" aria-label={label}>{@render icon(name, w, h)}</button>
{/snippet}

<div class="app">
  <header class="titlebar">
    <div class="brand">
      {@render icon('logo', 24)}
      {@render tool('home', 'Accueil')}
    </div>
    <h1>Autodesk Revit 2020.2 - Version interdite à la vente - Projet5 - Vue 3D: {'{3D}'}</h1>
    <div class="account">
      <svg width="6" height="10" aria-hidden="true"><path d="M5 1v8L1 5z" fill="#444" /></svg>
      {@render tool('binoculars', 'Rechercher')}
      <button class="user">{@render icon('user')}<span>anthony.goutt...</span>{@render caret()}</button>
      {@render tool('cart', 'Boutique')}
      <i class="bar"></i>
      <button class="help" aria-label="Aide">{@render icon('help')}{@render caret()}</button>
    </div>
    <div class="window">
      <button class="tool min" aria-label="Réduire"><i></i></button>
      {@render tool('restore', 'Restaurer', 16)}
      {@render tool('close', 'Fermer', 16)}
    </div>
  </header>

  <nav class="tabs">
    <button class="file">Fichier</button>
    {#each tabs as tab (tab.label)}
      <button style:width="{tab.width}px">{tab.label}</button>
    {/each}
    <button class="current">Modifier | Ossature</button>
    <svg class="more" width="13" height="10" aria-hidden="true"><path d="M0 0l6 5-6 5zM7 0l6 5-6 5z" fill="#fff" /></svg>
    <button class="fold" aria-label="Réduire le ruban">{@render icon('collapse', 20, 12)}{@render caret('pale')}</button>
  </nav>

  <div class="ribbon">
    <section class="panel p-select">
      <div class="body"><button class="big active">{@render icon('arrow', 18, 26)}<span>Modifier</span></button></div>
      <h2>Sélectionner {@render caret('wide')}</h2>
    </section>
    <section class="panel p-props">
      <div class="body">
        {@render tool('typeprops', 'Propriétés du type', 38)}
        <button class="tool toggled" aria-label="Propriétés">{@render icon('props', 28, 38)}</button>
      </div>
      <h2>Propriétés</h2>
    </section>
    <section class="panel p-clip">
      <div class="body">
        <button class="big dim">{@render icon('paste', 34, 38)}<span>Coller</span>{@render caret()}</button>
        <div class="small">
          {@render tool('cut', 'Couper')}
          {@render tool('copyclip', 'Copier')}
          {@render tool('matchprops', 'Identifier les propriétés')}
        </div>
      </div>
      <h2>Presse-papiers</h2>
    </section>
    <section class="panel p-geo">
      <div class="body">
        <div class="small labelled">
          <button>{@render icon('cope')}<span>Ajuster</span>{@render caret()}</button>
          <button>{@render icon('cutgeo')}<span>Couper</span>{@render caret()}</button>
          <button>{@render icon('join')}<span>Attacher</span>{@render caret()}</button>
        </div>
        <div class="small two">
          {@render tool('joinroof', 'Attacher/Détacher le toit')}
          {@render tool('paint', 'Peinture')}
          {@render tool('beamjoin', 'Jonctions de poutres')}
          <button class="with-caret" aria-label="Jonctions">{@render icon('wallopening')}{@render caret()}</button>
          {@render tool('walljoin', 'Jonctions de murs')}
          {@render tool('demolish', 'Démolir')}
        </div>
      </div>
      <h2>Géométrie</h2>
    </section>
    <section class="panel p-modify">
      <div class="body">
        <div class="large four">
          {#each largeModify as name (name)}{@render tool(name, name, 40)}{/each}
        </div>
        <div class="small three">
          {#each smallModify as name (name)}{@render tool(name, name)}{/each}
        </div>
      </div>
      <h2>Modifier</h2>
    </section>
    <section class="panel p-view">
      <div class="body">
        <div class="small pairs">
          <button class="with-caret" aria-label="Masquer">{@render icon('bulb')}{@render caret()}</button>
          {@render tool('explode', 'Eclaté')}
          <button class="with-caret" aria-label="Remplacer">{@render icon('brush')}{@render caret()}</button>
          {@render tool('linework', 'Lignes')}
          {@render tool('sectionbox', 'Zone de sélection')}
        </div>
      </div>
      <h2>Vue</h2>
    </section>
    <section class="panel p-measure">
      <div class="body">
        <div class="large">
          <button class="with-caret dim" aria-label="Mesurer">{@render icon('measure', 40, 24)}{@render caret()}</button>
          <button class="with-caret" aria-label="Cote alignée">{@render icon('dimension', 40)}{@render caret()}</button>
        </div>
      </div>
      <h2>Mesurer</h2>
    </section>
    <section class="panel p-create">
      <div class="body">
        <div class="large two-wide">
          {@render tool('groupcreate', 'Créer un groupe', 40)}
          {@render tool('groupsimilar', 'Créer similaire', 40)}
          {@render tool('assembly', 'Créer un assemblage', 40)}
          {@render tool('component', 'Créer des pièces', 40)}
        </div>
      </div>
      <h2>Créer</h2>
    </section>
    <section class="panel context p-mode">
      <div class="body"><button class="big">{@render icon('editfamily', 38)}<span>Modifier<br />la famille</span></button></div>
      <h2>Mode</h2>
    </section>
    <section class="panel context p-analytic">
      <div class="body"><button class="big">{@render icon('highlight', 38)}<span>Mettre en surbrillance<br />le modèle analytique</span></button></div>
      <h2>Analytique</h2>
    </section>
    <section class="panel context p-joint">
      <div class="body"><button class="big dim">{@render icon('editref', 40, 38)}<span>Modifier<br />la référence</span></button></div>
      <h2>Outils de jonction</h2>
    </section>
    <section class="panel context p-just">
      <div class="body">
        <button class="big">{@render icon('points', 40, 38)}<span>Points<br />de justification</span></button>
        <div class="large offsets">
          <button>{@render icon('offsety', 40)}<span>Décalage Y</span></button>
          <button>{@render icon('offsetz', 40)}<span>Décalage Z</span></button>
        </div>
      </div>
      <h2>Justification</h2>
    </section>
    <section class="panel context p-plane">
      <div class="body">
        <button class="big">{@render icon('workplane', 38)}<span>Modifier<br />le plan de construction</span></button>
        <i class="rule"></i>
        <button class="big">{@render icon('picknew', 40, 38)}<span>Choisir<br />un nouveau</span></button>
      </div>
      <h2>Plan de construction</h2>
    </section>
  </div>

  <div class="quick">
    {#each quickAccess as item, i (i)}
      {#if item.icon === 'sep'}
        <i class="bar" style:width="{item.width}px"></i>
      {:else}
        <button class:active={item.active} style:width="{item.width}px" aria-label={item.icon}>
          {@render icon(item.icon, item.active ? 23 : 20, 20)}
          {#if item.menu}{@render caret()}{/if}
        </button>
      {/if}
    {/each}
    {@render tool('overflow', 'Personnaliser', 10)}
  </div>

  <div class="options">Modifier | Ossature</div>

  <main>
    <aside class="properties">
      <div class="palette-head"><h2>Propriétés</h2>{@render tool('x', 'Fermer', 12)}</div>
      <button class="type">
        <span class="thumb">
          <svg width="80" height="80" viewBox="0 0 80 80" aria-hidden="true">
            <path d="M2 12 6 10l74 42-3 3z" fill="#8ea9c4" />
            <path d="M1 12v4l76 43v-4z" fill="#74797e" />
            <path d="M3 17v9l73 40v-8z" fill="#c6c4c2" />
            <path d="M1 26v3l74 41 5-2-1-3-3 1z" fill="#a8a6a4" />
            <path d="M2 14v13M77 55v13" stroke="#55595d" stroke-width="2" />
          </svg>
        </span>
        <span class="type-name">IPN<br />IPN200</span>
        {@render caret('wide')}
      </button>
      <div class="filter-row">
        <div class="combo grey">
          <select aria-label="Filtre de sélection"><option>Ossature (Autre) (1)</option></select>
          {@render icon('drop', 12, 8)}
        </div>
        <button class="edit-type">{@render icon('edittype')}<span>Modifier le type</span></button>
      </div>

      <div class="grid-area">
        <div class="grid-clip">
          <table>
            <colgroup><col class="c-name" /><col /><col class="c-assoc" /></colgroup>
            <tbody>
              {#each rows as row, i (i)}
                {#if row.head}
                  <tr class="head">
                    <th colspan="3" scope="colgroup"><div>{row.label}{@render icon('chevrons', 8, 10)}</div></th>
                  </tr>
                {:else}
                  <tr class:dim={row.dim}>
                    <th scope="row">{row.label}</th>
                    <td class={row.kind}>
                      {#if row.kind === 'material'}
                        <div class="edit">
                          <input aria-label={row.label} bind:value={material} />
                          <button aria-label="Parcourir">...</button>
                        </div>
                      {:else if row.kind === 'check'}
                        <input type="checkbox" aria-label={row.label} bind:checked={analytic} />
                      {:else}
                        {row.value}
                      {/if}
                    </td>
                    <td class="assoc">{#if row.assoc}<button aria-label="Associer un paramètre"></button>{/if}</td>
                  </tr>
                {/if}
              {/each}
            </tbody>
          </table>
        </div>
        <div class="scroll">
          {@render icon('up', 10, 8)}
          <div class="track"><i></i></div>
          {@render icon('down', 10, 8)}
        </div>
        <div class="callout"></div>
      </div>

      <div class="palette-foot">
        <a href="#aide">Aide des propriétés</a>
        <button disabled>Appliquer</button>
      </div>
    </aside>

    <section class="view">
      <div class="view-tabs">
        <button class="on">{@render icon('tabhouse')}<span>{'{3D}'}</span>{@render icon('x', 12)}</button>
        <button class="sheet">{@render icon('tabsheet')}<span>Relevé de matériaux d'ossature</span></button>
        <button>{@render icon('tabplan')}<span>Niveau 0</span></button>
        <div class="overflow">{@render tool('overflow', 'Liste des vues', 10)}</div>
      </div>

      <div class="stage">
        <div class="canvas">
          <svg class="beam" width="252" height="178" viewBox="0 0 252 178" aria-hidden="true">
            <path d="M5 2 247 163v10l-4 1L2 14V4z" fill="#86a2f4" />
            <path d="M5 6 244 167v3L4 11z" fill="#3f5ea6" />
            <path d="M4 9 243 169" stroke="#444f66" stroke-width="2" />
            <path d="M5 2 247 163M3 6l241 160M3 12l241 160M2 14l241 160" stroke="#1547dc" stroke-dasharray="3 1" fill="none" />
            <path d="M5 2 1 5h3v8H2l3 2M247 163l-3 1v8l3-1-4 3" stroke="#1540c8" stroke-width="1.6" fill="none" />
          </svg>

          <svg class="cube" width="130" height="124" viewBox="0 0 130 124" aria-hidden="true">
            <defs>
              <radialGradient id="shade"><stop offset="0" stop-color="#777" /><stop offset="1" stop-color="#fff" stop-opacity="0" /></radialGradient>
              <linearGradient id="face" x1="0" y1="0" x2="0" y2="1"><stop offset="0" stop-color="#f0f0f0" /><stop offset="1" stop-color="#d4d4d4" /></linearGradient>
            </defs>
            <ellipse cx="65" cy="67" rx="55" ry="39" fill="none" stroke="#f1f1f1" stroke-width="15" />
            <ellipse cx="65" cy="67" rx="62" ry="46" fill="none" stroke="#b9b9b9" stroke-dasharray="6 2" />
            <ellipse cx="65" cy="67" rx="48" ry="33" fill="#fff" stroke="#b9b9b9" stroke-dasharray="6 2" />
            <ellipse cx="65" cy="70" rx="40" ry="22" fill="url(#shade)" />
            <path d="m65 4 35 21-35 23-35-23z" fill="#efefef" stroke="#9c9c9c" />
            <path d="m31 25 34 23v34L32 58z" fill="url(#face)" stroke="#8c8c8c" />
            <path d="M99 25 65 48v34l32-24z" fill="url(#face)" stroke="#8c8c8c" />
            <g font-family="Open Sans, sans-serif" font-size="8" font-weight="700" fill="#989898" text-anchor="middle">
              <text transform="translate(65 27) rotate(31)" font-size="10">HAUT</text>
              <text transform="translate(48 57) skewY(34)">AVANT</text>
              <text transform="translate(82 57) skewY(-34)">DROITE</text>
            </g>
            <g font-family="Open Sans, sans-serif" font-size="15" font-weight="700" fill="#f4f4f4" stroke="#a8a8a8" text-anchor="middle">
              <text transform="translate(25 42) rotate(-30)">O</text>
              <text transform="translate(106 41) rotate(30)">N</text>
              <text transform="translate(22 99) rotate(-30)">S</text>
              <text transform="translate(112 99) rotate(-30)">E</text>
            </g>
          </svg>

          <div class="navbar">
            <div class="nav-end">{@render icon('navclose', 10)}</div>
            {@render tool('wheel', 'Disque de navigation', 28)}
            {@render caret()}
            <i></i>
            {@render tool('zoomfit', 'Zoom', 22)}
            {@render caret()}
            <div class="nav-end low">{@render icon('navmenu', 10)}</div>
          </div>
        </div>
        <div class="scroll tall">
          {@render icon('up', 10, 8)}
          <div class="track"><i></i></div>
          {@render icon('down', 10, 8)}
        </div>
      </div>

      <div class="view-bar">
        <span class="ratio">1 : 1000</span>
        {#each viewControls as item (item.icon)}
          <button style:width="{item.width}px" aria-label={item.icon}>{@render icon(item.icon)}</button>
        {/each}
        {@render icon('left', 8, 10)}
        <div class="track"><i></i></div>
        {@render icon('right', 8, 10)}
        <span class="grip">{@render icon('grip', 11)}</span>
      </div>
    </section>

    <aside class="browser">
      <div class="palette-head"><h2>Arborescence du projet - Projet5</h2>{@render tool('x', 'Fermer', 12)}</div>
      <ul>
        {#each tree as node, i (i)}
          <li class:bold={node.bold} class:selected={node.selected}>
            {#each node.guides as guide, g (g)}
              <span class="guide {guide}">
                {#if node.box && g === node.guides.length - 1}
                  <button class="box" class:plus={node.box === '+'} aria-label={node.label}></button>
                {/if}
              </span>
            {/each}
            {#if node.icon}<span class="node-icon">{@render icon(node.icon)}</span>{/if}
            <span class="label">{node.label}</span>
          </li>
        {/each}
      </ul>
    </aside>
  </main>

  <footer class="status">
    <p>Cliquez pour sélectionner. Appuyez sur TAB pour afficher d'autres options, sur CTR</p>
    {@render icon('worksets')}
    <div class="combo">
      <select aria-label="Sous-projet actif"><option></option></select>
      {@render icon('drop', 12, 8)}
    </div>
    {@render icon('editable')}
    <span class="count">:0</span>
    {@render icon('designopt')}
    {@render icon('addopt')}
    <div class="combo dim">
      <select aria-label="Variante"><option>Modèle de base</option></select>
      {@render icon('drop', 12, 8)}
    </div>
    <div class="picks">
      {#each selectionTools as name (name)}{@render tool(name, name, 20, 22)}{/each}
      <button class="filter">{@render icon('filter')}<span>:1</span></button>
    </div>
  </footer>
</div>

<style>
  :global(body) {
    margin: 0;
  }

  .app {
    display: flex;
    flex-direction: column;
    height: 100vh;
    overflow: hidden;
    background: #eee;
    color: #1e1e1e;
    font-family: 'Open Sans', 'Noto Sans', sans-serif;
    font-size: 14px;
    line-height: 20px;
    white-space: nowrap;
  }

  .app * {
    box-sizing: border-box;
  }

  svg {
    display: block;
    flex: none;
    overflow: visible;
  }

  h1,
  h2,
  p {
    margin: 0;
    font-size: inherit;
    font-weight: 400;
  }

  button {
    display: flex;
    align-items: center;
    padding: 0;
    border: 0;
    background: none;
    color: inherit;
    font: inherit;
    white-space: nowrap;
  }

  .caret {
    color: #444;
  }

  .caret.wide {
    width: 12px;
    height: 8px;
  }

  .caret.pale {
    color: #d5dcea;
  }

  /* title bar */
  .titlebar {
    display: flex;
    height: 34px;
    flex: none;
    background: #808080;
    color: #eee;
  }

  .brand {
    display: flex;
    gap: 6px;
    padding: 3px 0 0 5px;
    align-items: flex-start;
    width: 300px;
  }

  h1 {
    flex: 1;
    text-align: center;
    padding-left: 442px;
  }

  .account {
    display: flex;
    align-items: center;
    height: 27px;
    gap: 12px;
    margin-right: 79px;
  }

  .user {
    gap: 5px;
  }

  .user span {
    width: 102px;
    text-align: left;
  }

  .account .bar {
    width: 1px;
    height: 22px;
    background: #9a9a9a;
  }

  .help {
    gap: 9px;
  }

  .window {
    display: flex;
    align-items: center;
    gap: 16px;
    height: 27px;
    padding-right: 6px;
  }

  .min {
    width: 12px;
    height: 16px;
    align-items: flex-end;
  }

  .min i {
    width: 10px;
    height: 3px;
    background: #fff;
  }

  /* ribbon tabs */
  .tabs {
    display: flex;
    flex: none;
    align-items: center;
    height: 25px;
    background: #808080;
    color: #e4e4e4;
  }

  .tabs button {
    justify-content: center;
    height: 25px;
  }

  .tabs .file {
    width: 65px;
    margin-right: 4px;
    background: #2c7cb8;
    color: #fff;
  }

  .tabs .current {
    width: 148px;
    background: #e4eed6;
    color: #2a2a2a;
  }

  .more {
    margin: 0 11px 0 4px;
  }

  .tabs .fold {
    gap: 4px;
  }

  /* ribbon */
  .ribbon {
    display: flex;
    flex: none;
    height: 119px;
    border-top: 1px solid #dbe8cd;
    border-bottom: 1px solid #dbe8cd;
    color: #444;
  }

  .panel {
    display: flex;
    flex: none;
    flex-direction: column;
    border-right: 1px solid #e2edd5;
  }

  .panel .body {
    display: flex;
    height: 94px;
  }

  .panel h2 {
    display: flex;
    align-items: center;
    justify-content: center;
    gap: 6px;
    height: 23px;
  }

  .context {
    border-right: 2px solid #e9f0e0;
  }

  .context h2 {
    background: #e4eed6;
  }

  .big {
    flex-direction: column;
    gap: 6px;
    padding-top: 6px;
    line-height: 19px;
    text-align: center;
  }

  .big span {
    display: block;
  }

  .big.dim {
    color: #b3b3b3;
  }

  .dim > .caret {
    color: #777;
  }

  .big.active {
    width: 64px;
    height: 90px;
    margin-top: 3px;
    padding-top: 9px;
    gap: 12px;
    border: 1px solid #2c7ac4;
    background: linear-gradient(#c6dcf3, #b0d0ef);
  }

  .p-select {
    width: 113px;
  }

  .p-select .body {
    justify-content: center;
  }

  .p-props {
    width: 80px;
  }

  .p-props .body {
    flex-direction: column;
    align-items: center;
    gap: 4px;
    padding-top: 7px;
  }

  .toggled {
    justify-content: center;
    width: 48px;
    height: 43px;
    border: 1px solid #2c7ac4;
    background: #c1dbf4;
  }

  .p-clip {
    width: 109px;
  }

  .p-clip .body {
    gap: 20px;
    padding-left: 19px;
  }

  .p-geo {
    width: 195px;
  }

  .p-geo .body {
    padding-left: 8px;
  }

  .p-modify {
    width: 297px;
  }

  .p-modify .body {
    gap: 9px;
    padding-left: 8px;
  }

  .p-view {
    width: 81px;
  }

  .p-view .body {
    padding-left: 7px;
  }

  .p-measure {
    width: 70px;
  }

  .p-measure .body {
    padding-left: 8px;
  }

  .p-create {
    width: 107px;
    border-right: 5px solid #e4eed6;
  }

  .p-create .body {
    padding-left: 8px;
  }

  .p-mode {
    width: 74px;
  }

  .p-analytic {
    width: 158px;
  }

  .p-joint {
    width: 131px;
  }

  .p-mode .body,
  .p-analytic .body,
  .p-joint .body {
    justify-content: center;
  }

  .p-just {
    width: 237px;
  }

  .p-just .body {
    justify-content: space-between;
    padding: 0 7px;
  }

  .p-plane {
    flex: 1;
  }

  .p-plane .body {
    justify-content: space-between;
    padding: 0 7px;
  }

  .rule {
    width: 1px;
    height: 90px;
    margin-top: 3px;
    background: #c8c8c8;
  }

  .small {
    display: grid;
    grid-auto-rows: 20px;
    align-content: start;
    gap: 10px 12px;
    padding-top: 8px;
  }

  .labelled {
    width: 111px;
  }

  .labelled button,
  .with-caret {
    gap: 7px;
  }

  .labelled .caret {
    margin-left: 4px;
  }

  .small.two {
    grid-template-columns: 20px 40px;
    column-gap: 11px;
  }

  .small.three {
    grid-template-columns: 20px 20px 20px;
  }

  .small.pairs {
    grid-template-columns: 32px 20px;
  }

  .large {
    display: grid;
    grid-auto-rows: 40px;
    align-content: start;
    gap: 5px 9px;
    padding-top: 5px;
  }

  .large.four {
    grid-template-columns: repeat(4, 40px);
  }

  .large.two-wide {
    grid-template-columns: 40px 40px;
    column-gap: 7px;
  }

  .offsets button {
    gap: 4px;
  }

  /* quick access */
  .quick {
    display: flex;
    flex: none;
    align-items: center;
    height: 31px;
    padding-left: 8px;
    background: #808080;
  }

  .quick button {
    gap: 8px;
  }

  .quick .active {
    justify-content: center;
    height: 28px;
    margin-right: 4px;
    border: 1px solid #2c7ac4;
    background: #c1dbf4;
  }

  .quick .bar {
    height: 27px;
    border-left: 1px solid #979797;
  }

  .options {
    flex: none;
    height: 33px;
    padding: 7px 9px;
  }

  main {
    display: flex;
    flex: 1;
    min-height: 0;
    border-top: 2px solid #c9c9c9;
  }

  .palette-head {
    display: flex;
    flex: none;
    align-items: center;
    justify-content: space-between;
    height: 25px;
    padding: 0 3px;
    color: #4a4a4a;
  }

  /* properties */
  .properties {
    display: flex;
    flex: none;
    flex-direction: column;
    width: 513px;
    border-right: 2px solid #c9c9c9;
  }

  .properties .palette-head {
    padding-right: 7px;
  }

  .type {
    flex: none;
    width: 507px;
    height: 89px;
    padding: 3px 0 3px 3px;
    border: 1px solid #d4d4d4;
    color: #555;
    line-height: 20px;
    text-align: left;
  }

  .thumb {
    border: 1px solid #ddd;
    background: #fff;
  }

  .type-name {
    flex: 1;
    padding-left: 6px;
  }

  .filter-row {
    display: flex;
    flex: none;
    height: 32px;
    padding-top: 3px;
  }

  .combo {
    display: grid;
    align-items: center;
    background: #fff;
  }

  .combo select,
  .combo svg {
    grid-area: 1 / 1;
  }

  .combo svg {
    justify-self: end;
    margin-right: 4px;
    pointer-events: none;
  }

  select {
    width: 100%;
    height: 100%;
    padding: 0 4px;
    border: 0;
    appearance: none;
    background: none;
    color: inherit;
    font: inherit;
  }

  .combo.grey {
    width: 360px;
    height: 27px;
    border: 1px solid #adadad;
    background: #e1e1e1;
  }

  .edit-type {
    gap: 7px;
    height: 24px;
    padding-left: 7px;
  }

  .grid-area {
    display: flex;
    position: relative;
    flex: 1;
    min-height: 0;
  }

  .grid-clip {
    flex: none;
    width: 486px;
    overflow: hidden;
    background: #fff;
  }

  table {
    width: 100%;
    table-layout: fixed;
    border-spacing: 0;
    line-height: 18px;
  }

  .c-name {
    width: 238px;
  }

  .c-assoc {
    width: 15px;
  }

  tr {
    height: 22px;
  }

  tr:nth-child(even) {
    height: 23px;
  }

  th,
  td {
    padding: 0 0 2px 3px;
    border-right: 1px dotted #8a8a8a;
    border-bottom: 1px dotted #8a8a8a;
    font-weight: 400;
    text-align: left;
  }

  th[scope='row'] {
    padding-left: 10px;
  }

  .head th {
    padding: 0 7px 0 3px;
    border: 0;
    background: #dadada;
  }

  .head div {
    display: flex;
    align-items: center;
    justify-content: space-between;
  }

  tr.dim {
    color: #7a7a7a;
  }

  td.material,
  td.check,
  td.assoc {
    padding: 0;
  }

  .assoc button {
    width: 12px;
    height: 20px;
    margin-left: 1px;
    border: 1px solid #a9a9a9;
    background: #ddd;
  }

  .edit {
    display: flex;
    align-items: center;
    height: 21px;
    padding-right: 1px;
    border: 1px solid #111;
    outline: 1px solid #111;
    outline-offset: -2px;
  }

  .edit input {
    flex: 1;
    min-width: 0;
    height: 18px;
    padding: 0 0 2px 2px;
    border: 0;
    background: none;
    color: inherit;
    font: inherit;
  }

  .edit button {
    justify-content: center;
    width: 14px;
    height: 14px;
    border: 1px solid #2c7ac4;
    background: #c8e2f8;
    line-height: 10px;
  }

  td input[type='checkbox'] {
    display: grid;
    place-content: center;
    width: 16px;
    height: 16px;
    margin: 3px 4px 2px;
    border: 1px solid #333;
    appearance: none;
    background: #fff;
  }

  td input[type='checkbox']:checked::before {
    width: 10px;
    height: 5px;
    border-bottom: 1px solid #444;
    border-left: 1px solid #444;
    content: '';
    transform: translateY(-2px) rotate(-45deg);
  }

  .scroll {
    display: flex;
    flex-direction: column;
    align-items: center;
    width: 20px;
    margin-left: 1px;
    padding: 7px 0;
    gap: 7px;
    background: #f0f0f0;
  }

  .scroll .track {
    flex: 1;
    width: 18px;
  }

  .scroll .track i {
    display: block;
    height: 67%;
    background: #cacaca;
  }

  .callout {
    position: absolute;
    top: 308px;
    left: 230px;
    width: 265px;
    height: 36px;
    border: 5px solid #ed1c24;
    pointer-events: none;
  }

  .palette-foot {
    display: flex;
    flex: none;
    justify-content: space-between;
    height: 34px;
    padding: 2px 6px 0 3px;
  }

  .palette-foot a {
    padding-top: 2px;
    color: #1a6fcf;
  }

  .palette-foot button {
    justify-content: center;
    width: 91px;
    height: 26px;
    background: #ccc;
    color: #838383;
  }

  /* view */
  .view {
    display: flex;
    flex: 1;
    flex-direction: column;
    min-width: 0;
  }

  .view-tabs {
    display: flex;
    flex: none;
    height: 25px;
    background: #cbcbcb;
    color: #4a4a4a;
  }

  .view-tabs button {
    gap: 9px;
    padding: 0 6px;
  }

  .view-tabs .on {
    width: 160px;
    background: #fff;
    color: #333;
    font-weight: 600;
  }

  .view-tabs .on span {
    flex: 1;
    text-align: left;
  }

  .view-tabs .sheet {
    width: 270px;
  }

  .overflow {
    display: flex;
    flex: 1;
    justify-content: flex-end;
    padding-right: 3px;
  }

  .stage {
    display: flex;
    flex: 1;
    min-height: 0;
    background: #fff;
  }

  .canvas {
    position: relative;
    flex: 1;
  }

  .beam {
    position: absolute;
    top: 245px;
    left: 275px;
  }

  .cube {
    position: absolute;
    top: 49px;
    right: 24px;
  }

  .navbar {
    display: flex;
    position: absolute;
    top: 171px;
    right: 0;
    flex-direction: column;
    align-items: center;
    width: 44px;
    height: 147px;
    padding: 3px;
    border: 2px solid #b9b9b9;
    border-radius: 6px;
    background: #f5f5f5;
  }

  .navbar .caret {
    margin-top: 9px;
    color: #8a8a8a;
  }

  .navbar i {
    width: 32px;
    height: 1px;
    margin: 5px 0 9px;
    background: #b5b5b5;
  }

  .nav-end {
    align-self: flex-end;
    margin-bottom: 12px;
  }

  .nav-end.low {
    margin: auto 0 0;
  }

  .scroll.tall {
    width: 20px;
    margin: 3px 4px 0 0;
  }

  .tall .track i {
    height: 22px;
    margin-top: 318px;
  }

  .view-bar {
    display: flex;
    flex: none;
    align-items: center;
    height: 22px;
    margin: 0 3px 3px 0;
    padding-left: 27px;
    border-left: 2px solid #fff;
    background: #f0f0f0;
  }

  .ratio {
    width: 72px;
  }

  .view-bar .track {
    flex: 1;
    height: 18px;
    padding-left: 157px;
  }

  .view-bar .track i {
    display: block;
    width: 21px;
    height: 18px;
    background: #cacaca;
  }

  .grip {
    padding: 8px 4px 0 13px;
  }

  /* project browser */
  .browser {
    display: flex;
    flex: none;
    flex-direction: column;
    width: 553px;
    border-left: 3px solid #c9c9c9;
  }

  ul {
    flex: 1;
    margin: 0 0 3px;
    padding: 0;
    background: #fff;
    list-style: none;
  }

  li {
    display: flex;
    height: 22px;
    align-items: center;
  }

  li:nth-child(even) {
    height: 23px;
  }

  .guide {
    display: flex;
    position: relative;
    align-items: center;
    justify-content: center;
    width: 25px;
    height: 100%;
  }

  .guide::before {
    position: absolute;
    top: 0;
    bottom: 0;
    left: 12px;
    border-left: 1px dotted #999;
    content: '';
  }

  .guide.root::before {
    top: 50%;
  }

  .guide.end::before {
    bottom: 50%;
  }

  .guide:not(.pipe)::after {
    position: absolute;
    top: 50%;
    right: -5px;
    left: 12px;
    border-top: 1px dotted #999;
    content: '';
  }

  .box {
    position: relative;
    z-index: 1;
    width: 11px;
    height: 11px;
    border: 1px solid #919191;
    background: linear-gradient(#3b5cb0, #3b5cb0) center / 5px 1px no-repeat #f5f5f5;
  }

  .box.plus {
    background:
      linear-gradient(#3b5cb0, #3b5cb0) center / 5px 1px no-repeat,
      linear-gradient(#3b5cb0, #3b5cb0) center / 1px 5px no-repeat,
      #f5f5f5;
  }

  .node-icon {
    position: relative;
    z-index: 1;
    width: 20px;
    margin: 0 3px 0 1px;
    background: #fff;
  }

  .label {
    margin-left: 5px;
    padding: 0 4px;
  }

  .node-icon + .label {
    margin-left: 0;
  }

  .bold .label {
    font-weight: 700;
  }

  .selected .label {
    height: 100%;
    background: #e0e0e0;
  }

  /* status bar */
  .status {
    display: flex;
    flex: none;
    align-items: center;
    height: 30px;
    padding: 0 91px 0 2px;
    background: #cbcbcb;
  }

  .status p {
    width: 540px;
    margin-right: 9px;
    overflow: hidden;
  }

  .status .combo {
    width: 255px;
    height: 22px;
    margin: 0 11px;
  }

  .status .combo.dim {
    color: #8a8a8a;
  }

  .count {
    width: 46px;
    padding-left: 6px;
  }

  .count + svg {
    margin-right: 12px;
  }

  .picks {
    display: flex;
    flex: 1;
    justify-content: flex-end;
    gap: 12px;
  }
</style>
